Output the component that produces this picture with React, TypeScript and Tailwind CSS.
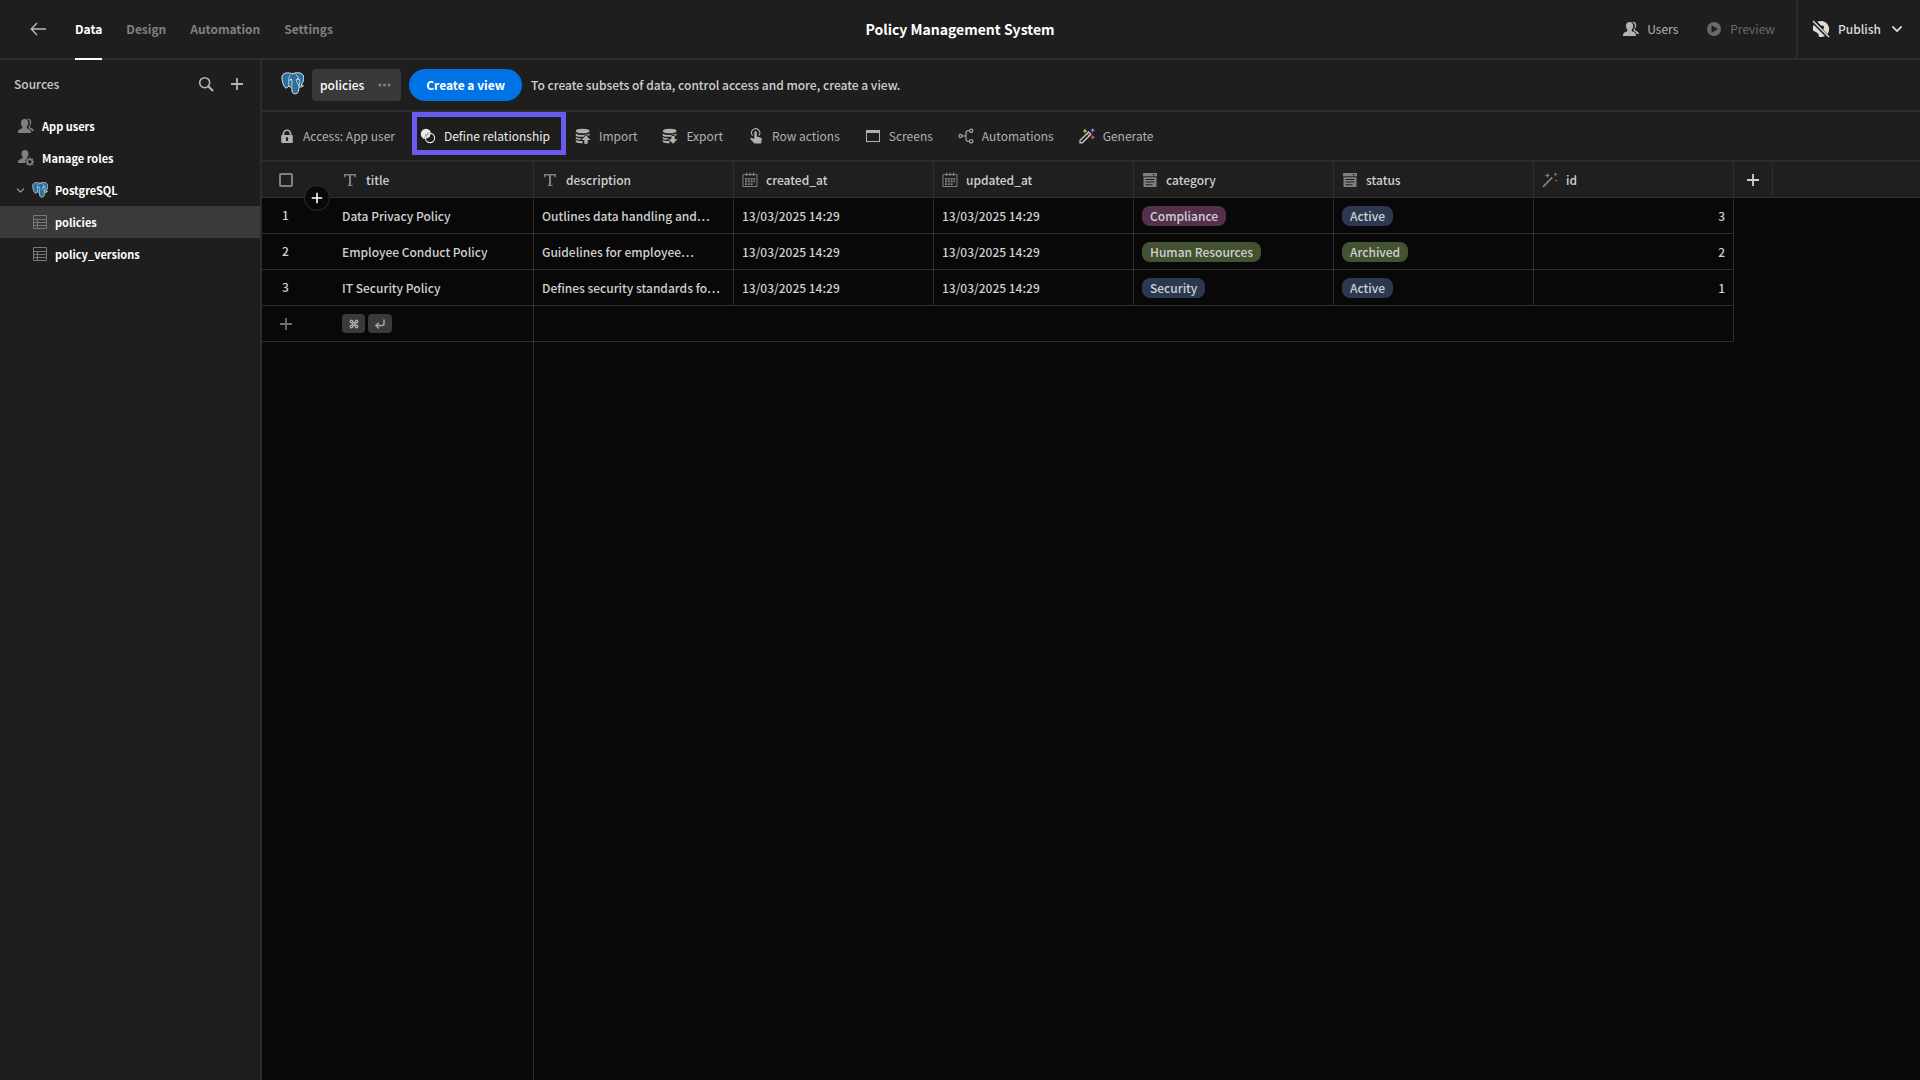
import React from 'react';
import { Command, CornerDownLeft } from 'lucide-react';

type IconProps = { className?: string };

const Svg = ({ className = '', size = 'size-4', children, box = 16 }: { className?: string; size?: string; children: React.ReactNode; box?: number }) => (
  <svg viewBox={`0 0 ${box} ${box}`} className={`${size} shrink-0 overflow-visible fill-current ${className}`} aria-hidden="true">
    {children}
  </svg>
);

const PostgresIcon = ({ className = '' }: IconProps) => (
  <svg viewBox="0 0 24 24" className={`shrink-0 ${className}`} fill="none" stroke="#dfe8ee" strokeLinecap="round" aria-hidden="true">
    <path
      d="M12 1.800C10 1 7.500.8 5.300 1 2.300 1.300.8 3.500 1 6.500c.2 3 1.300 7.500 3.200 9.700 1.200 1.200 2.500.2 4-1.400.8.8 1.800 1.200 3 1.200l.2 3.500c.2 2.500 1.800 3.700 4 3.200 2.200-.5 3-1.800 3.100-4l.3-3c2 .2 3.800-.3 4.600-1.400-.8-.1-1.600 0-2.400-.3 1.800-2.700 3-6 2.800-8.500C23.400 2.300 20.500.5 17.500.8 15.500.6 13.500 1.200 12 1.800z"
      fill="#2f6f9c"
      strokeWidth="1"
    />
    <path d="M9 3.800C7.800 6.500 8 10.500 8.200 14.800M8.700 8.700c1-.8 2.700-.6 3 .4.200 1.900-.8 3.400-.4 5.900M15.300 2.200c2.600 2 4 5.500 4.500 8.300-.2 1.300-1 2.600-1 4.200M18.800 7.300c-1.200-.4-2.700 0-2.800.9 0 2.500 2.200 4.500 2.800 6.500" strokeWidth=".8" />
    <path d="M10.300 7.700h.6M17 7.500h.5" strokeWidth="1.200" />
  </svg>
);

const BackIcon = () => (
  <Svg>
    <path d="M7 2 1.2 8 7 14M1.2 8H16" fill="none" stroke="currentColor" strokeWidth="1.3" />
  </Svg>
);

const UsersIcon = ({ className }: IconProps) => (
  <Svg className={className}>
    <path d="M6.600 1c2.200 0 3.600 1.600 3.600 3.900 0 1.700-.7 3-1.500 3.800v1.100c0 .4.3.6.7.8 1.900.7 3.600 1.700 3.600 3.500V15H0v-.9c0-1.800 1.700-2.800 3.700-3.500.4-.2.7-.4.7-.8V8.700C3.600 7.900 3 6.600 3 4.900 3 2.600 4.400 1 6.600 1z" />
    <path d="M9.200.9C11.900.2 13.300 2 13.300 4.300c0 1.600-.6 2.800-1.500 3.500v.9c0 .4.2.6.6.8 2 .8 3.400 1.800 3.600 3.600h-2c-.5-1.300-1.500-2.100-3.400-2.800v-1.800c.8-1 1.300-2.100 1.300-3.600 0-1.800-.9-3.300-2.700-4z" />
  </Svg>
);

const RolesIcon = () => (
  <Svg>
    <path d="M7 0c2.200 0 3.500 1.600 3.500 3.700 0 1.500-.5 2.600-1.300 3.400v1.200C7.600 9.200 7 10.800 7.400 12.900H0v-1c0-1.800 2-2.700 3.900-3.300.5-.2.8-.4.8-.9v-.9C3.900 6.100 3.500 5.100 3.500 3.700 3.500 1.600 4.800 0 7 0z" />
    <circle cx="11.800" cy="11.800" r="2.500" fill="none" stroke="currentColor" strokeWidth="1.500" />
    <path d="M11.800 7.600v2M11.800 14v2M7.600 11.800h2M14 11.800h2M8.800 8.800l1.500 1.500M13.300 13.300l1.500 1.500M8.800 14.800l1.500-1.500M13.300 10.300l1.500-1.500" stroke="currentColor" strokeWidth="1.400" />
  </Svg>
);

const PlayIcon = () => (
  <Svg>
    <path fillRule="evenodd" d="M8 1a7 7 0 1 1 0 14A7 7 0 0 1 8 1zM5.500 4.200v7.600L12 8z" />
  </Svg>
);

const GlobeOffIcon = () => (
  <Svg size="size-[18px]" box={18}>
    <path d="M5.200 1.700C8 .4 11.500.6 14 2.700c2 1.600 3.300 4 3.100 6.800-.1 1.800-.6 3.300-1.500 4.500l-4.500-4.600 1-1.900-.8-2-2.100.3z" />
    <path d="M1.600 4.700 12.900 16.100c-1.800 1-4 1.200-6 .7l-.4-2.900-2.600-2L1.200 10.800C.7 8.600.9 6.500 1.600 4.700z" />
    <path d="M1 1 17 17" stroke="currentColor" strokeWidth="1.500" />
  </Svg>
);

const ChevronDown = ({ className, size }: IconProps & { size: string }) => (
  <Svg className={className} size={size}>
    <path d="M2.500 5.300 8 10.800l5.500-5.500" fill="none" stroke="currentColor" strokeWidth="2.300" strokeLinecap="round" strokeLinejoin="round" />
  </Svg>
);

const SearchIcon = () => (
  <Svg>
    <circle cx="6.700" cy="6.700" r="5" fill="none" stroke="currentColor" strokeWidth="1.600" />
    <path d="m10.300 10.300 4.200 4.200" stroke="currentColor" strokeWidth="2" strokeLinecap="round" />
  </Svg>
);

const PlusIcon = ({ size }: { size?: string }) => (
  <Svg size={size}>
    <path d="M8 2v12M2 8h12" stroke="currentColor" strokeWidth="1.800" />
  </Svg>
);

const TableIcon = () => (
  <Svg className="text-[#777777]">
    <path d="M1.500 1.500h13v13h-13zM1 5.500h14M1 8.500h14M1 11.500h14M5.500 5.500v9" fill="none" stroke="currentColor" />
  </Svg>
);

const LockIcon = () => (
  <Svg>
    <path fillRule="evenodd" d="M13 7h-.6V5.800a4.400 4.400 0 0 0-8.800 0V7H3c-.5 0-.8.3-.8.800v6.400c0 .5.3.8.8.8h10c.5 0 .8-.3.8-.8V7.800c0-.5-.3-.8-.8-.8zM5.300 5.800a2.700 2.700 0 0 1 5.400 0V7H5.300zM9 11.300V13H7v-1.700a1.300 1.300 0 1 1 2 0z" />
  </Svg>
);

const RelationshipIcon = () => (
  <Svg>
    <circle cx="6" cy="6" r="5.200" />
    <circle cx="10" cy="10" r="5.400" className="fill-[#1e1e1e]" />
    <circle cx="10" cy="10" r="4.600" fill="none" stroke="currentColor" strokeWidth="1.100" />
    <path d="M10.400 6A4.500 4.500 0 0 1 6 10.400 4.500 4.500 0 0 1 10.400 6z" />
  </Svg>
);

const DataIcon = ({ down = false }: { down?: boolean }) => (
  <Svg>
    <ellipse cx="7.700" cy="3" rx="6.900" ry="2.300" />
    <path d="M.8 5.400c1.500 1.100 4 1.500 6.900 1.500s5.400-.4 6.900-1.500v2.200l-2.200-.1-1.400-1.300-2.500 2.600c-3.300.2-6.300-.1-7.700-1.100z" />
    <path d="M.8 8.900c1.200.8 2.800 1.200 4.600 1.300l1.100.1-1.200 1.500C3.500 11.700 1.800 11.500.8 11z" />
    <path d="M.8 12c1.200.7 3 1 5 1.100h1.700v2.200C4.500 15.300.8 14.900.8 13.500z" />
    {down ? <path d="M9.300 8h3.400v3.200h2.800L11 15.700l-4.500-4.500h2.800z" /> : <path d="M11 7.300 15.500 12h-2.800v3.700H9.300V12H6.500z" />}
  </Svg>
);

const TouchIcon = () => (
  <Svg>
    <path d="M4.600 7.600A4.100 4.100 0 1 1 10.800 7.500" fill="none" stroke="currentColor" strokeWidth="1.100" />
    <path d="M6.300 4.600c0-1.700 2.500-1.700 2.500 0v4l3.400.9c1.300.4 1.700 1.100 1.500 2.300l-.6 3.600H6.400L2.500 11.300c-.6-.8.2-1.900 1.300-1.400l2.500 1.100z" />
  </Svg>
);

const ScreenIcon = () => (
  <Svg>
    <path fillRule="evenodd" d="M1 2h14v12H1zM2 5v8h12V5z" />
  </Svg>
);

const FlowIcon = () => (
  <Svg>
    <g fill="none" stroke="currentColor" strokeWidth="1.100">
      <circle cx="2.500" cy="8" r="1.600" />
      <circle cx="13.200" cy="2.800" r="1.700" />
      <circle cx="13.200" cy="13.200" r="1.700" />
      <path d="M4 8h4M11.500 2.800H9.200L8 4v8l1.200 1.200h2.300" />
    </g>
  </Svg>
);

const GenerateIcon = () => (
  <Svg>
    <path d="M1 14.800v-2.300L9.600 4l2.300 2.300-8.600 8.500z" fill="none" stroke="#c8c8c8" strokeWidth="1.300" />
    <path d="m8 5.500 2.400 2.400" stroke="#c8c8c8" />
    <path d="M6 .5 6.800 2.200 8.500 3 6.800 3.800 6 5.500 5.200 3.800 3.500 3 5.200 2.200z" fill="#e5b93c" />
    <path d="m13.700-.3.8 1.800 1.800.8-1.800.8-.8 1.800-.8-1.800-1.800-.8 1.800-.8z" fill="#7b83ea" />
    <path d="M13.700 6.700l.8 1.700 1.800.8-1.800.7-.8 1.800-.8-1.800-1.800-.7 1.800-.8z" fill="#e2574c" />
  </Svg>
);

const TextIcon = () => (
  <Svg>
    <path d="M2 2h12v3.300h-1.200l-.5-1.700H9v9.200l1.800.5V14H5.200v-.7l1.800-.5V3.600H3.700l-.5 1.700H2z" />
  </Svg>
);

const CalendarIcon = () => (
  <Svg>
    <path d="M1 2.500h14v12H1z" fill="none" stroke="currentColor" />
    <path d="M4.500.5v3.500M8 .5v3.500M11.500.5v3.500" stroke="currentColor" strokeWidth="1.200" />
    <path d="M3 6h2v1.700H3zm2.800 0h2v1.700h-2zm2.800 0h2v1.700h-2zm2.800 0h1.800v1.700h-1.800zM3 8.600h2v1.700H3zm2.800 0h2v1.700h-2zm2.800 0h2v1.700h-2zm2.800 0h1.800v1.700h-1.800zM3 11.200h2v1.700H3zm2.800 0h2v1.700h-2zm2.800 0h2v1.700h-2z" />
  </Svg>
);

const OptionsIcon = () => (
  <Svg>
    <path fillRule="evenodd" d="M1 1h14v3.300H1zM10.300 2l1.300 1.500L12.900 2z" />
    <path fillRule="evenodd" d="M1.500 5.200h13V15h-13zM3.500 7v1h9V7zm0 2.600v1h9v-1zm0 2.600v1h7v-1z" />
  </Svg>
);

const WandIcon = () => (
  <Svg>
    <path d="M1 14.800 10.300 5.300" stroke="currentColor" strokeWidth="1.700" />
    <path d="M5.500.8 6.200 2.800 8.200 3.500 6.200 4.200 5.500 6.200 4.800 4.200 2.800 3.500 4.800 2.800zM13.500.3l.6 1.600 1.600.6-1.600.6-.6 1.600-.6-1.600-1.600-.6 1.600-.6zM14 7l.4 1.200 1.200.4-1.200.4-.4 1.200-.4-1.200-1.200-.4 1.200-.4z" />
  </Svg>
);

const tabs = ['Data', 'Design', 'Automation', 'Settings'];

const tools = [
  { label: 'Access: App user', icon: <LockIcon /> },
  { label: 'Define relationship', icon: <RelationshipIcon />, active: true },
  { label: 'Import', icon: <DataIcon /> },
  { label: 'Export', icon: <DataIcon down /> },
  { label: 'Row actions', icon: <TouchIcon /> },
  { label: 'Screens', icon: <ScreenIcon /> },
  { label: 'Automations', icon: <FlowIcon /> },
  { label: 'Generate', icon: <GenerateIcon /> },
];

const columns = [
  { name: 'title', icon: <TextIcon /> },
  { name: 'description', icon: <TextIcon /> },
  { name: 'created_at', icon: <CalendarIcon /> },
  { name: 'updated_at', icon: <CalendarIcon /> },
  { name: 'category', icon: <OptionsIcon /> },
  { name: 'status', icon: <OptionsIcon /> },
  { name: 'id', icon: <WandIcon /> },
];

const purple = 'bg-[#55304d]';
const green = 'bg-[#435230]';
const blue = 'bg-[#2c3850]';
const date = '13/03/2025 14:29';

const rows = [
  { title: 'Data Privacy Policy', description: 'Outlines data handling and…', category: 'Compliance', categoryColor: purple, status: 'Active', statusColor: blue, id: 3 },
  { title: 'Employee Conduct Policy', description: 'Guidelines for employee…', category: 'Human Resources', categoryColor: green, status: 'Archived', statusColor: green, id: 2 },
  { title: 'IT Security Policy', description: 'Defines security standards fo…', category: 'Security', categoryColor: blue, status: 'Active', statusColor: blue, id: 1 },
];

const Tag = ({ color, children }: { color: string; children: React.ReactNode }) => (
  <span className={`inline-block h-5 rounded-lg px-2 align-middle leading-5 ${color}`}>{children}</span>
);

const cell = 'h-9 overflow-hidden border-r border-b border-[#2e2e2e] px-2 whitespace-nowrap';

function Header() {
  return (
    <header className="grid h-[60px] grid-cols-[1fr_auto_1fr] border-b-2 border-[#2c2c2c]">
      <div className="flex items-center pl-[30px]">
        <button aria-label="Back" className="text-[#bdbdbd]"><BackIcon /></button>
        <nav className="ml-[29px] flex gap-6 self-stretch font-bold">
          {tabs.map((tab, i) => (
            <a key={tab} href="#" className={`-mb-0.5 flex items-center border-b-2 ${i === 0 ? 'border-white text-white' : 'border-transparent text-[#808080]'}`}>{tab}</a>
          ))}
        </nav>
      </div>
      <h1 className="self-center text-sm font-bold text-white">Policy Management System</h1>
      <div className="flex items-center justify-end">
        <button className="flex items-center gap-2 text-[#b4b4b4]"><UsersIcon />Users</button>
        <button disabled className="mr-[21px] ml-7 flex items-center gap-2 text-[#6a6a6a]"><PlayIcon />Preview</button>
        <button className="flex items-center gap-2 self-stretch border-l-2 border-[#2c2c2c] pr-[17px] pl-3.5 font-medium text-[#dcdcdc]">
          <GlobeOffIcon />Publish<ChevronDown className="ml-0.5" size="size-3" />
        </button>
      </div>
    </header>
  );
}

function Sidebar() {
  return (
    <aside className="w-[262px] shrink-0 border-r-2 border-[#2c2c2c]">
      <div className="flex h-[50px] items-center pr-[15px] pb-0.5 pl-3.5 text-[#b4b4b4]">
        <h2 className="flex-1 font-medium text-[#c8c8c8]">Sources</h2>
        <button aria-label="Search"><SearchIcon /></button>
        <button aria-label="Add source" className="ml-[15px]"><PlusIcon /></button>
      </div>
      <ul className="text-[11px] font-bold text-white">
        <li><a href="#" className="flex h-8 items-center gap-2 pl-[18px]"><span className="text-[#808080]"><UsersIcon /></span>App users</a></li>
        <li><a href="#" className="flex h-8 items-center gap-2 pl-[18px]"><span className="text-[#808080]"><RolesIcon /></span>Manage roles</a></li>
        <li><a href="#" className="flex h-8 items-center gap-[7px] pl-4"><ChevronDown className="text-[#909090]" size="size-[9px]" /><PostgresIcon className="size-4" />PostgreSQL</a></li>
        <li><a href="#" aria-current="page" className="flex h-8 items-center gap-[7px] bg-[#3a3a3a] pl-8"><TableIcon />policies</a></li>
        <li><a href="#" className="flex h-8 items-center gap-[7px] pl-8"><TableIcon />policy_versions</a></li>
      </ul>
    </aside>
  );
}

function DataTable() {
  return (
    <table className="w-full table-fixed border-separate border-spacing-0 text-left font-medium">
      <colgroup>
        <col className="w-[72px]" />
        {columns.map((c) => <col key={c.name} className="w-[200px]" />)}
        <col className="w-[39px]" />
        <col />
      </colgroup>
      <thead className="bg-[#1f1f1f]">
        <tr>
          <th className="relative h-9 border-b border-[#2e2e2e] pl-[17px]">
            <input type="checkbox" aria-label="Select all rows" className="block size-3.5 appearance-none rounded-xs border-2 border-[#808080]" />
            <button aria-label="Add row" className="absolute right-1 -bottom-3.5 flex size-[26px] items-center justify-center rounded-full border border-[#2e2e2e] bg-[#080808] text-white">
              <PlusIcon size="size-3.5" />
            </button>
          </th>
          {columns.map((c) => (
            <th key={c.name} scope="col" className={`${cell} font-medium`}>
              <span className="flex items-center gap-2 text-[#808080]">{c.icon}<span className="text-[#d0d0d0]">{c.name}</span></span>
            </th>
          ))}
          <th className="h-9 border-r border-b border-[#2e2e2e]">
            <button aria-label="Add column" className="mx-auto block text-[#d0d0d0]"><PlusIcon /></button>
          </th>
          <th className="border-b border-[#2e2e2e]" />
        </tr>
      </thead>
      <tbody>
        {rows.map((r, i) => (
          <tr key={r.title}>
            <td className="h-9 border-b border-[#2e2e2e] pr-[25px] pb-0.5 text-center">{i + 1}</td>
            <td className={cell}>{r.title}</td>
            <td className={cell}>{r.description}</td>
            <td className={cell}>{date}</td>
            <td className={cell}>{date}</td>
            <td className={cell}><Tag color={r.categoryColor}>{r.category}</Tag></td>
            <td className={cell}><Tag color={r.statusColor}>{r.status}</Tag></td>
            <td className={`${cell} text-right`}>{r.id}</td>
          </tr>
        ))}
        <tr>
          <td className="h-9 border-b border-[#2e2e2e] pl-4"><button aria-label="New row" className="block text-[#6e6e6e]"><PlusIcon /></button></td>
          <td className={cell}>
            <span className="flex gap-[3px] text-[#a8a8a8]">
              <kbd aria-label="Command" className="flex h-[19px] w-[23px] items-center justify-center rounded bg-[#3a3a3a]"><Command className="size-2.5" strokeWidth={3.5} /></kbd>
              <kbd aria-label="Enter" className="flex h-[19px] w-6 items-center justify-center rounded bg-[#3a3a3a]"><CornerDownLeft className="size-3" strokeWidth={3} /></kbd>
            </span>
          </td>
          <td colSpan={6} className={cell} />
        </tr>
      </tbody>
    </table>
  );
}

export default function App() {
  return (
    <div className="flex min-h-screen flex-col bg-[#1e1e1e] font-['Noto_Sans_CJK_SC','Source_Sans_3',sans-serif] text-xs leading-5 text-[#d0d0d0]">
      <Header />
      <div className="flex flex-1">
        <Sidebar />
        <main className="flex min-w-0 flex-1 flex-col">
          <div className="flex h-[52px] items-center border-b-2 border-[#2c2c2c] pl-[19px]">
            <PostgresIcon className="mb-1 size-[23px]" />
            <button className="ml-2 flex h-8 items-center gap-3 rounded bg-[#393939] pr-[9px] pl-2 font-medium text-white">
              policies
              <svg viewBox="0 0 16 16" className="size-4 fill-[#808080]" aria-hidden="true"><circle cx="4" cy="8" r="1.500" /><circle cx="8.500" cy="8" r="1.500" /><circle cx="13" cy="8" r="1.500" /></svg>
            </button>
            <button className="ml-2 h-8 rounded-full bg-[#0073e6] px-[17px] font-bold text-white">Create a view</button>
            <p className="ml-[9px] font-medium">To create subsets of data, control access and more, create a view.</p>
          </div>
          <div className="flex h-[50px] items-center gap-[25px] border-b-2 border-[#2c2c2c] pl-[17px] text-[#b0b0b0]">
            {tools.map((t) => (
              <button key={t.label} className={`relative flex items-center gap-2 ${t.active ? 'text-[#ececec]' : ''}`}>
                {t.icon}{t.label}
                {t.active && <span className="absolute -top-3.5 -right-4 -bottom-[9px] -left-2 border-[5px] border-[#6a5af0]" />}
              </button>
            ))}
          </div>
          <div className="flex flex-1 flex-col bg-[#080808]">
            <DataTable />
            <div className="w-[272px] flex-1 border-r border-[#2e2e2e]" />
          </div>
        </main>
      </div>
    </div>
  );
}
